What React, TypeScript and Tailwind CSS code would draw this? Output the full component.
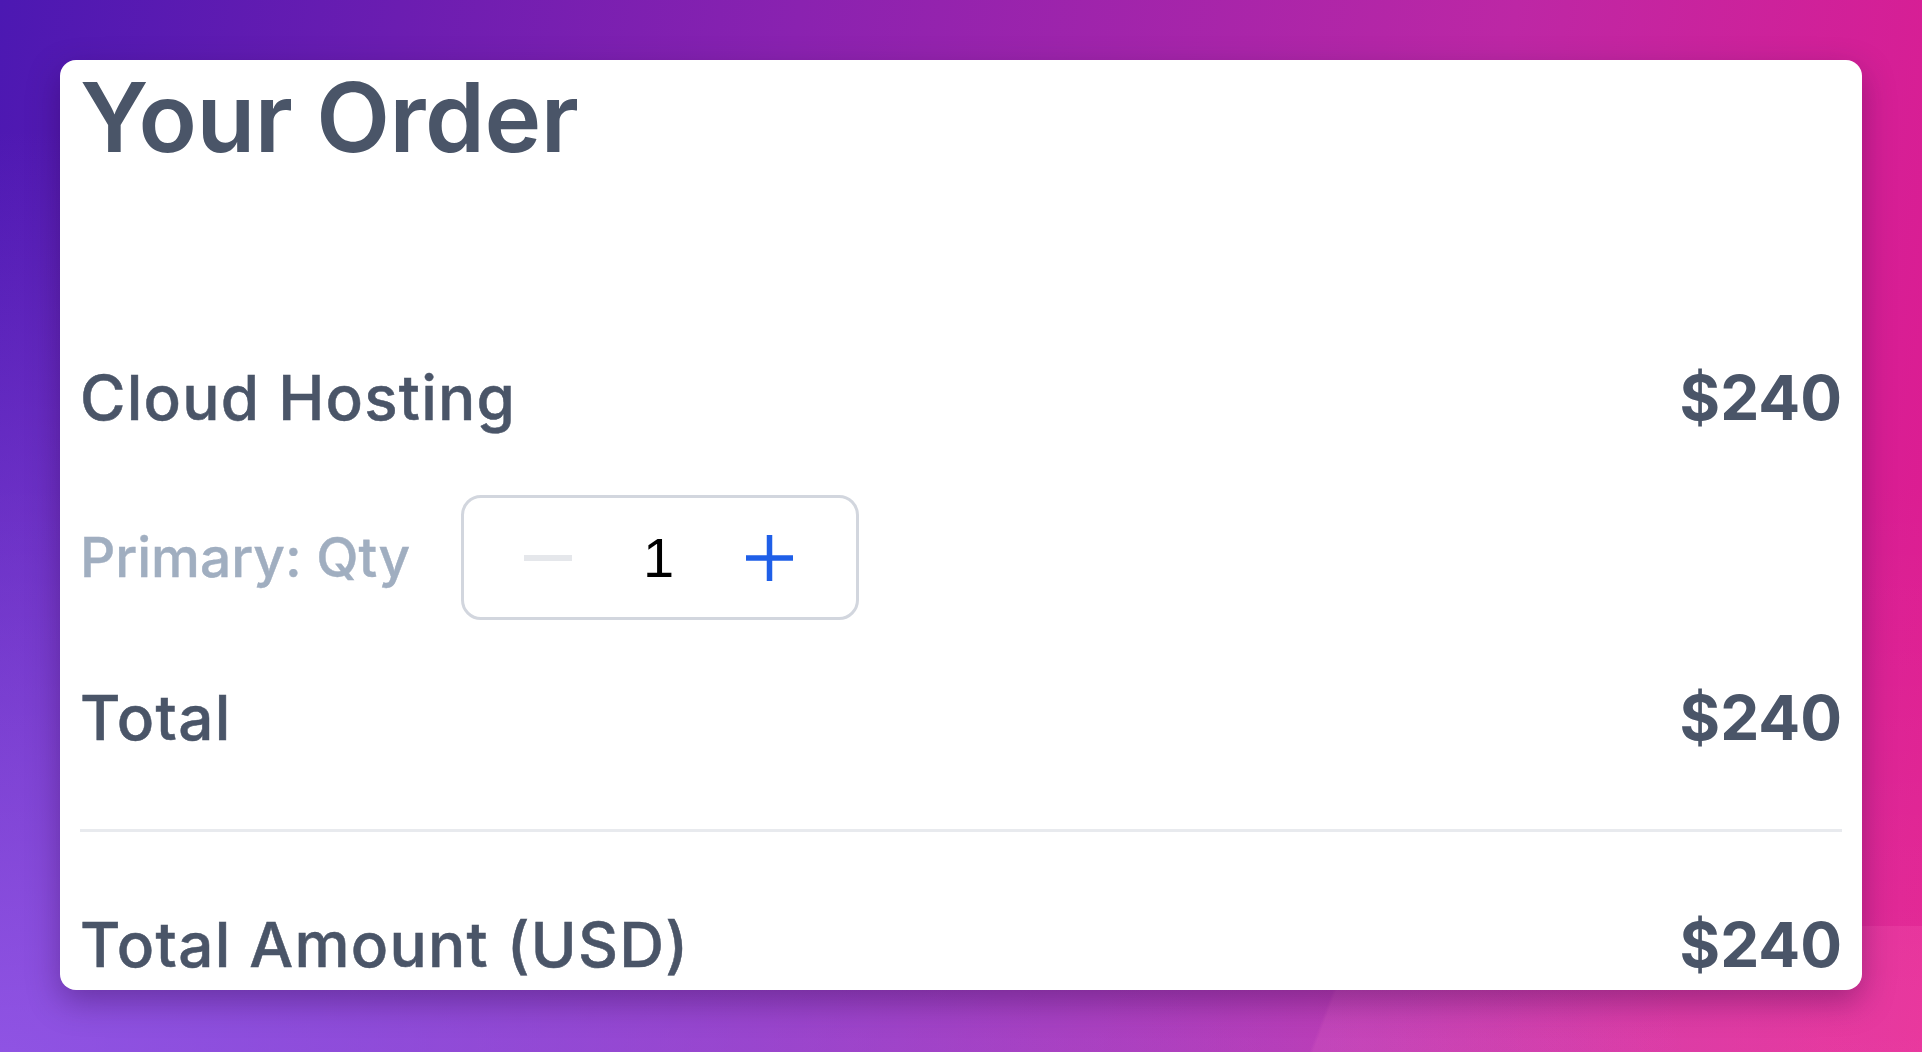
const textFont = { fontFamily: "Inter, 'Noto Sans', sans-serif" };

const Row = ({ label, amount, className }: { label: string; amount: string; className?: string }) => (
  <div className={`flex items-baseline justify-between text-[62px] leading-none text-[#4a5568] ${className ?? ""}`}>
    <span className="font-medium tracking-[0.02em] [-webkit-text-stroke:0.5px_#4a5568]">{label}</span>
    <span className="font-bold">{amount}</span>
  </div>
);

const Stepper = () => (
  <div className="flex h-[125px] w-[398px] items-center rounded-[20px] border-[3px] border-[#d2d6de] pl-[60px]">
    <button className="flex h-[48px] w-[48px] items-center justify-center" aria-label="Decrease">
      <svg width="48" height="6" viewBox="0 0 48 6">
        <rect x="0" y="0" width="48" height="6" fill="#e5e7eb" />
      </svg>
    </button>
    <span
      className="ml-[71px] w-[20px] text-center text-[56px] leading-none text-black"
      style={{ fontFamily: "'Liberation Sans', Arial, sans-serif" }}
    >
      1
    </span>
    <button className="ml-[82px] flex h-[48px] w-[48px] items-center justify-center" aria-label="Increase">
      <svg width="47" height="46" viewBox="0 0 47 46">
        <path d="M23.5 0v46M0 23h47" stroke="#1f5fe8" strokeWidth="5.5" fill="none" />
      </svg>
    </button>
  </div>
);

export default function App() {
  return (
    <div
      className="min-h-[1052px] w-full bg-no-repeat bg-[radial-gradient(ellipse_at_0%_100%,rgba(150,90,235,0.85),transparent_62%),linear-gradient(111deg,transparent_68.9%,rgba(255,110,190,0.18)_69.1%),linear-gradient(to_top,rgba(255,255,255,0.08),transparent_55%),linear-gradient(100deg,#4c18b2_0%,#8a22b0_38%,#bd27a5_72%,#e21b8e_100%)] [background-size:100%_100%,100%_126px,100%_100%,100%_100%] [background-position:0_0,0_100%,0_0,0_0] p-[60px]"
      style={textFont}
    >
      <div className="h-[930px] overflow-hidden rounded-2xl bg-white px-[20px] pt-[9px] shadow-[0_12px_32px_rgba(40,0,60,0.35)]">
        <h1 className="text-[96px] font-semibold leading-none tracking-[-0.005em] text-[#4a5568]">Your Order</h1>

        <Row label="Cloud Hosting" amount="$240" className="mt-[202px]" />

        <div className="mt-[66px] flex items-center gap-[51px]">
          <span className="text-[55px] font-medium leading-none text-[#a0aec0] [-webkit-text-stroke:0.4px_#a0aec0]">
            Primary: Qty
          </span>
          <Stepper />
        </div>

        <Row label="Total" amount="$240" className="mt-[67px]" />

        <div className="mt-[80px] h-[3px] bg-[#e8eaee]" />

        <Row label="Total Amount (USD)" amount="$240" className="mt-[82px]" />
      </div>
    </div>
  );
}
